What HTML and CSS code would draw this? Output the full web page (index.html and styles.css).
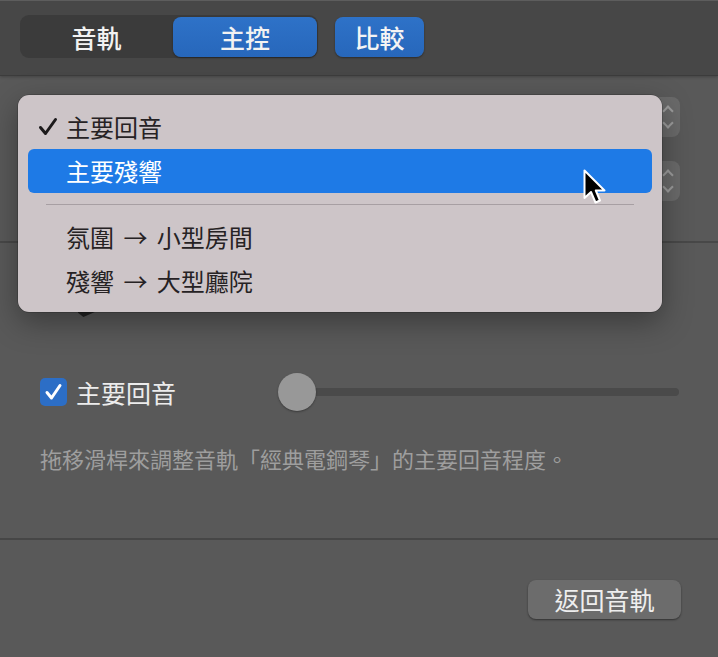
FILE: index.html
```html
<!DOCTYPE html>
<html lang="zh-Hant">
<head>
<meta charset="utf-8">
<link rel="stylesheet" href="styles.css">
</head>
<body>
<div class="window">
  <header class="topbar">
    <div class="segmented">
      <div class="seg">音軌</div>
      <div class="seg seg-on">主控</div>
    </div>
    <div class="btn-blue">比較</div>
  </header>

  <section class="sec-top">
    <div class="popup-row"><div class="popup"><span class="chev"></span></div></div>
    <div class="popup-row"><div class="popup"><span class="chev"></span></div></div>
  </section>

  <section class="sec-mid">
    <div class="peek"></div>
    <div class="check-row">
      <label class="check">
        <span class="box"><svg viewBox="0 0 27 28" width="27" height="28"><path d="M7 14.5 L11.5 20 L20 7.5" fill="none" stroke="#fff" stroke-width="3" stroke-linecap="round" stroke-linejoin="round"/></svg></span>
        <span class="check-label">主要回音</span>
      </label>
      <div class="slider">
        <div class="track"></div>
        <div class="knob"></div>
      </div>
    </div>
    <p class="desc">拖移滑桿來調整音軌「經典電鋼琴」的主要回音程度。</p>
  </section>

  <footer class="foot">
    <div class="btn-gray">返回音軌</div>
  </footer>

  <div class="menu">
    <div class="item"><svg class="tick" width="20" height="20" viewBox="0 0 20 20"><path d="M2.5 10.5 L7.5 16.5 L17.5 2.5" fill="none" stroke="#1c1a1b" stroke-width="3" stroke-linecap="round" stroke-linejoin="round"/></svg>主要回音</div>
    <div class="item item-hl">主要殘響</div>
    <div class="sep"></div>
    <div class="item">氛圍 → 小型房間</div>
    <div class="item">殘響 → 大型廳院</div>
  </div>

  <svg class="cursor" width="26" height="40" viewBox="0 0 26 40">
    <path d="M1.5 1.5 L1.5 29 L8 23 L12.5 33.5 L17 31.5 L12.8 21.5 L21.5 21.5 Z" fill="#000" stroke="#fff" stroke-width="2" stroke-linejoin="round"/>
  </svg>
</div>
</body>
</html>
```

FILE: styles.css
```css
* { box-sizing: border-box; }
html, body { margin: 0; padding: 0; }
body {
  background: #595959;
  font-family: "Noto Sans CJK TC", "Noto Sans", sans-serif;
  width: 718px;
  height: 657px;
  overflow: hidden;
}
.window { position: relative; width: 718px; height: 657px; }

.topbar {
  height: 76px;
  background: #474747;
  border-top: 1px solid #5d5d5d;
  border-bottom: 1px solid #3c3c3c;
  box-shadow: 0 1px 3px rgba(0,0,0,0.25);
  display: flex;
  align-items: flex-start;
  padding: 14px 0 0 20px;
  gap: 17px;
}
.segmented {
  display: flex;
  align-items: center;
  height: 43px;
  background: #3b3b3b;
  border-radius: 9px;
  padding: 1px 1px 1px 0;
}
.seg {
  width: 153px;
  text-align: center;
  color: #f2f2f2;
  font-size: 25px;
  font-weight: 500;
  line-height: 40px;
}
.seg-on {
  width: 144px;
  height: 40px;
  background: linear-gradient(#2e72c8, #2767bb);
  border-radius: 8px;
  box-shadow: 0 1px 2px rgba(0,0,0,0.4);
}
.btn-blue {
  margin-top: 2px;
  width: 89px;
  height: 40px;
  line-height: 40px;
  text-align: center;
  font-size: 25px;
  font-weight: 500;
  color: #f4f4f4;
  background: linear-gradient(#2e72c8, #2767bb);
  border-radius: 8px;
  box-shadow: 0 1px 2px rgba(0,0,0,0.4);
}

.sec-top {
  height: 167px;
  border-bottom: 2px solid #484848;
  padding-top: 21px;
  display: flex;
  flex-direction: column;
  gap: 24px;
}
.popup-row { display: flex; justify-content: flex-end; padding-right: 38px; }
.popup {
  position: relative;
  width: 360px;
  height: 40px;
  background: #6a6a6a;
  border-radius: 8px;
}
.chev {
  position: absolute;
  right: 8px;
  top: 8px;
  width: 8px;
  height: 24px;
}
.chev::before, .chev::after {
  content: "";
  position: absolute;
  left: 0;
  width: 6px;
  height: 6px;
  border-left: 2px solid #9c9c9c;
  border-top: 2px solid #9c9c9c;
}
.chev::before { top: 2px; transform: rotate(45deg); }
.chev::after { bottom: 2px; transform: rotate(-135deg); }

.sec-mid {
  position: relative;
  height: 297px;
  border-bottom: 2px solid #464646;
  padding: 129px 39px 0 40px;
}
.peek {
  position: absolute;
  left: 78px;
  top: 60px;
  width: 18px;
  height: 14px;
  background: #222;
  clip-path: polygon(0 0, 100% 0, 100% 60%, 30% 100%, 0 70%);
}
.check-row {
  display: flex;
  align-items: center;
  height: 40px;
}
.check { display: flex; align-items: center; gap: 9px; width: 238px; }
.box {
  width: 27px;
  height: 28px;
  background: #2c6ec6;
  border-radius: 5px;
  display: block;
}
.box svg { display: block; }
.check-label { color: #ececec; font-size: 25px; line-height: 30px; }
.slider {
  position: relative;
  flex: 1;
  height: 40px;
}
.track {
  position: absolute;
  left: 19px;
  right: 0;
  top: 16px;
  height: 8px;
  border-radius: 4px;
  background: #4a4a4a;
}
.knob {
  position: absolute;
  left: 0;
  top: 1px;
  width: 38px;
  height: 38px;
  border-radius: 50%;
  background: #989898;
  box-shadow: 0 1px 2px rgba(0,0,0,0.35);
}
.desc {
  margin: 31px 0 0;
  color: #9e9e9e;
  font-size: 22px;
  line-height: 30px;
}

.foot {
  display: flex;
  justify-content: flex-end;
  padding: 40px 37px 0 0;
}
.btn-gray {
  width: 153px;
  height: 39px;
  line-height: 39px;
  text-align: center;
  font-size: 25px;
  color: #eeeeee;
  background: #6c6c6c;
  border-radius: 8px;
  box-shadow: 0 1px 2px rgba(0,0,0,0.45);
}

.menu {
  position: absolute;
  left: 18px;
  top: 95px;
  width: 644px;
  height: 217px;
  background: #cdc5c8;
  border-radius: 11px;
  padding: 10px 10px 9px;
  box-shadow: 0 10px 30px rgba(0,0,0,0.35), 0 0 0 0.5px rgba(0,0,0,0.3);
}
.item {
  position: relative;
  height: 44px;
  line-height: 44px;
  padding-left: 38px;
  font-size: 24px;
  word-spacing: 4px;
  color: #262224;
  border-radius: 6px;
}
.item-hl { background: #1e7ae6; color: #ffffff; }
.tick {
  position: absolute;
  left: 10px;
  top: 12px;
}
.sep {
  height: 1px;
  margin: 11px 18px 10px;
  background: #a79fa3;
}
.cursor {
  position: absolute;
  left: 583px;
  top: 169px;
}
```
